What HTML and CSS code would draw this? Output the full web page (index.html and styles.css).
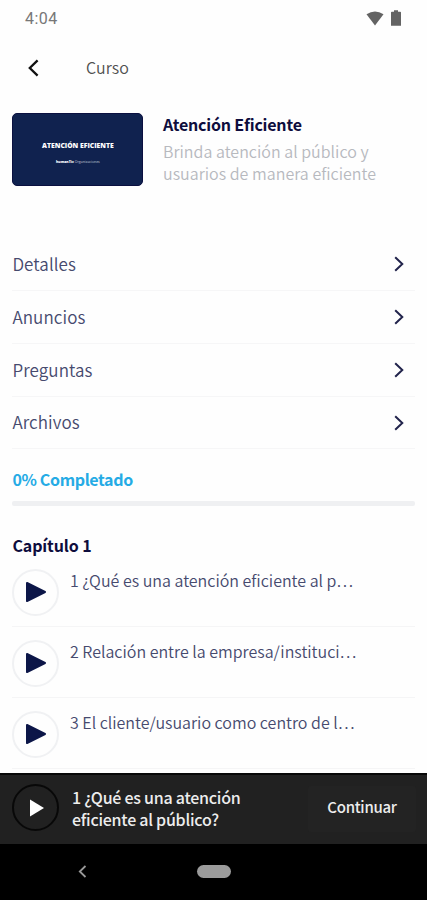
FILE: index.html
```html
<!DOCTYPE html>
<html lang="es">
<head>
<meta charset="utf-8">
<title>Curso</title>
<link rel="stylesheet" href="styles.css">
</head>
<body>
<div class="screen">
  <div class="status">
    <span class="clock">4:04</span>
    <svg class="wifi" width="18" height="15" viewBox="0 0 18 15"><path d="M0.5 3.2Q9 -2.4 17.5 3.2L9 14.5Z"/></svg>
    <svg class="battery" width="10" height="16" viewBox="0 0 10 16"><path d="M0 2.6Q0 1.8 0.8 1.8H3V0.3H7V1.8H9.2Q10 1.8 10 2.6V15.7H0Z"/></svg>
  </div>
  <header class="topbar">
    <svg width="11" height="18" viewBox="0 0 11 18"><path d="M9.6 1.4L1.8 9L9.6 16.6"/></svg>
    <h1>Curso</h1>
  </header>
  <section class="course">
    <div class="cover">
      <strong>ATENCIÓN EFICIENTE</strong>
      <span><b>humanTic</b> Organizaciones</span>
    </div>
    <div class="about">
      <h2>Atención Eficiente</h2>
      <p>Brinda atención al público y<br>usuarios de manera eficiente</p>
    </div>
  </section>
  <nav class="menu">
    <a><span>Detalles</span><svg width="10" height="16" viewBox="0 0 10 16"><path d="M1.2 1.2L8.3 8L1.2 14.8"/></svg></a>
    <a><span>Anuncios</span><svg width="10" height="16" viewBox="0 0 10 16"><path d="M1.2 1.2L8.3 8L1.2 14.8"/></svg></a>
    <a><span>Preguntas</span><svg width="10" height="16" viewBox="0 0 10 16"><path d="M1.2 1.2L8.3 8L1.2 14.8"/></svg></a>
    <a><span>Archivos</span><svg width="10" height="16" viewBox="0 0 10 16"><path d="M1.2 1.2L8.3 8L1.2 14.8"/></svg></a>
  </nav>
  <section class="progress">
    <span>0% Completado</span>
    <div class="track"></div>
  </section>
  <section class="chapter">
    <h3>Capítulo 1</h3>
    <div class="lesson">
      <span class="play"><svg width="22" height="22" viewBox="0 0 22 22"><path d="M2 2L20 11L2 20Z"/></svg></span>
      <span class="title">1 ¿Qué es una atención eficiente al p…</span>
    </div>
    <div class="lesson">
      <span class="play"><svg width="22" height="22" viewBox="0 0 22 22"><path d="M2 2L20 11L2 20Z"/></svg></span>
      <span class="title">2 Relación entre la empresa/instituci…</span>
    </div>
    <div class="lesson">
      <span class="play"><svg width="22" height="22" viewBox="0 0 22 22"><path d="M2 2L20 11L2 20Z"/></svg></span>
      <span class="title">3 El cliente/usuario como centro de l…</span>
    </div>
  </section>
  <section class="player">
    <span class="play"><svg width="16" height="18" viewBox="0 0 16 18"><path d="M1 0.5L15 9L1 17.5Z"/></svg></span>
    <p>1 ¿Qué es una atención<br>eficiente al público?</p>
    <button>Continuar</button>
  </section>
  <div class="system">
    <svg width="9" height="13" viewBox="0 0 9 13"><path d="M7.5 1L1.8 6.5L7.5 12"/></svg>
    <span class="home"></span>
  </div>
</div>
</body>
</html>
```
FILE: styles.css
```css
* { box-sizing: border-box; }
body { margin: 0; }
h1, h2, h3, p { margin: 0; }
svg { display: block; flex: none; }

.screen {
  width: 427px;
  height: 900px;
  overflow: hidden;
  display: flex;
  flex-direction: column;
  background: #fefefe;
  color: #464a6e;
  font: 350 16px/22px "Noto Sans CJK JP", "Noto Sans", sans-serif;
}

.status { height: 36px; display: flex; align-items: center; padding: 0 26px 0 25px; flex: none; }
.clock { flex: 1; font: 400 16px/20px Roboto, sans-serif; letter-spacing: 0.5px; color: #777; padding-top: 1px; }
.status svg { fill: #636363; }
.battery { margin-left: 7px; }

.topbar { height: 64px; display: flex; align-items: center; padding-left: 28px; gap: 47px; flex: none; }
.topbar svg { fill: none; stroke: #111; stroke-width: 2.3; }
.topbar h1 { font-size: 16px; font-weight: 350; line-height: 22px; color: #505050; letter-spacing: 0.05px; padding-bottom: 2px; }

.course { height: 138px; padding: 13px 12px 0 12.4px; display: flex; gap: 19.6px; flex: none; }
.cover {
  width: 131px;
  height: 73px;
  border-radius: 5px;
  border: 1px solid #0b1040;
  background: #10224f;
  color: #fff;
  display: flex;
  flex-direction: column;
  align-items: center;
  padding-top: 27px;
  white-space: nowrap;
}
.cover strong { font: 800 6.8px/10px "Open Sans", sans-serif; }
.cover span { font: 400 3.5px/6px "Open Sans", sans-serif; margin-top: 8px; color: #c3cad8; }
.cover b { color: #fff; font-weight: 800; }
.about h2 { font-size: 16px; font-weight: 700; line-height: 22px; color: #0e0d3d; letter-spacing: -0.2px; }
.about p { color: #b7b9be; margin-top: 5px; line-height: 22px; letter-spacing: 0.02px; white-space: nowrap; }

.menu { padding: 0 12px; flex: none; }
.menu a {
  height: 52.85px;
  display: flex;
  align-items: center;
  justify-content: space-between;
  padding-right: 11px;
  border-bottom: 1px solid #f6f6f7;
}
.menu span { font-size: 17px; letter-spacing: 0.1px; padding-left: 0.4px; }
.menu svg { fill: none; stroke: #22244c; stroke-width: 2; margin-top: 1px; }

.progress { height: 84.6px; padding: 18.6px 12px 0 12.4px; color: #25abe5; font-weight: 700; letter-spacing: -0.35px; flex: none; }
.track { height: 5px; margin-top: 11px; border-radius: 2px; background: #eff0f2; }

.chapter { height: 239px; padding: 0 12px 0 12.4px; overflow: hidden; flex: none; }
.chapter h3 { font-size: 16px; font-weight: 700; line-height: 22px; color: #0e0d3d; letter-spacing: -0.1px; }
.lesson { height: 71px; display: flex; gap: 10.6px; padding-top: 13px; border-bottom: 1px solid #f5f5f6; }
.lesson .title { white-space: nowrap; }
.play {
  width: 47px;
  height: 47px;
  border: 2px solid #f0f1f3;
  border-radius: 50%;
  display: flex;
  align-items: center;
  justify-content: center;
  flex: none;
}
.lesson .play svg { fill: #0c1648; stroke: #0c1648; stroke-width: 2; stroke-linejoin: round; }

.player {
  height: 71px;
  display: flex;
  align-items: center;
  padding: 0 11px 0 12px;
  gap: 13px;
  background: #212121;
  border-top: 2px solid #080808;
  color: #ededed;
  font-weight: 500;
  letter-spacing: -0.25px;
  flex: none;
}
.player .play { border-color: #080808; margin-bottom: 3px; }
.player .play svg { fill: #fff; margin-left: 3px; }
.player p { flex: 1; line-height: 22px; white-space: nowrap; padding-bottom: 3px; }
.player button {
  width: 108px;
  height: 46px;
  padding: 0 0 4px;
  border: 0;
  border-radius: 3px;
  background: #232323;
  color: inherit;
  font: inherit;
  font-size: 15px;
  letter-spacing: -0.3px;
}

.system { height: 56px; background: #000; display: flex; align-items: center; padding-left: 78px; flex: none; }
.system svg { fill: none; stroke: #999; stroke-width: 1.8; }
.home { width: 34px; height: 13px; border-radius: 7px; background: #9b9b9b; margin-left: 110px; }
```
